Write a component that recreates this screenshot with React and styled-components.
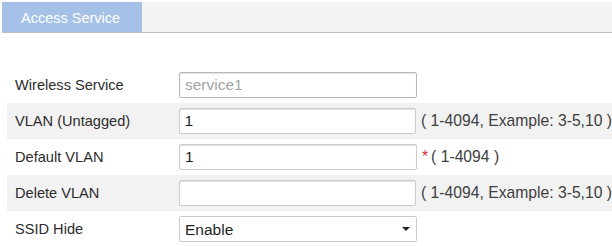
import React from "react";
import styled, { createGlobalStyle } from "styled-components";

const GlobalStyle = createGlobalStyle`
  html, body {
    margin: 0;
    padding: 0;
    background: #fff;
    font-family: "Liberation Sans", Arial, sans-serif;
  }
`;

const Page = styled.div`
  width: 612px;
  height: 246px;
  padding: 2px 0 0 2px;
  box-sizing: border-box;
  overflow: hidden;
`;

const TabBar = styled.div`
  display: flex;
  height: 30px;
  background: #f3f3f3;
  border-bottom: 1px solid #bdbdbd;
`;

const Tab = styled.div`
  width: 121px;
  padding: 3px 0 0 19px;
  background: #a5c1e7;
  color: #fff;
  font-size: 14.5px;
  line-height: 27px;
`;

const Form = styled.div`
  margin: 34px 0 0 5px;
  display: flex;
  flex-direction: column;
`;

const Row = styled.div`
  display: flex;
  align-items: center;
  height: 36px;
  background: ${p => (p.$shaded ? "#f2f2f2" : "transparent")};
`;

const Label = styled.div`
  width: 164px;
  padding-left: 8px;
  font-size: 14.6px;
  color: #2c2c2c;
`;

const TextInput = styled.input`
  box-sizing: border-box;
  width: 238px;
  height: 26px;
  margin: 0 0 1px;
  padding: 0 5px;
  border: 1px solid ${p => (p.disabled ? "#b8b8b8" : "#cccccc")};
  border-radius: 2px;
  box-shadow: inset 0 1px 1px rgba(0, 0, 0, 0.12);
  background: #fff;
  font-family: inherit;
  font-size: 15.5px;
  color: ${p => (p.disabled ? "#a3a3a3" : "#1e1e1e")};
  outline: none;
  &:disabled { background: #fff; }
`;

const SelectWrap = styled.div`
  position: relative;
  width: 238px;
  height: 26px;
`;

const Select = styled.select`
  appearance: none;
  box-sizing: border-box;
  width: 100%;
  height: 100%;
  padding: 0 5px;
  border: 1px solid #cccccc;
  border-radius: 2px;
  background: #fff;
  font-family: inherit;
  font-size: 15.5px;
  color: #1e1e1e;
  outline: none;
`;

const Arrow = styled.span`
  position: absolute;
  right: 7px;
  top: 11px;
  width: 0;
  height: 0;
  border-left: 4px solid transparent;
  border-right: 4px solid transparent;
  border-top: 4px solid #222;
  pointer-events: none;
`;

const Hint = styled.span`
  margin-left: 5px;
  font-size: 15.7px;
  color: #404040;
  white-space: nowrap;
`;

const Star = styled.span`
  color: #d9343a;
  margin-right: 3px;
`;

const App = () => (
  <>
    <GlobalStyle />
    <Page>
      <TabBar>
        <Tab>Access Service</Tab>
      </TabBar>
      <Form>
        <Row>
          <Label>Wireless Service</Label>
          <TextInput disabled defaultValue="service1" />
        </Row>
        <Row $shaded>
          <Label>VLAN (Untagged)</Label>
          <TextInput defaultValue="1" />
          <Hint>( 1-4094, Example: 3-5,10 )</Hint>
        </Row>
        <Row>
          <Label>Default VLAN</Label>
          <TextInput defaultValue="1" />
          <Hint><Star>*</Star>( 1-4094 )</Hint>
        </Row>
        <Row $shaded>
          <Label>Delete VLAN</Label>
          <TextInput defaultValue="" />
          <Hint>( 1-4094, Example: 3-5,10 )</Hint>
        </Row>
        <Row>
          <Label>SSID Hide</Label>
          <SelectWrap>
            <Select defaultValue="enable">
              <option value="enable">Enable</option>
              <option value="disable">Disable</option>
            </Select>
            <Arrow />
          </SelectWrap>
        </Row>
      </Form>
    </Page>
  </>
);

export default App;
